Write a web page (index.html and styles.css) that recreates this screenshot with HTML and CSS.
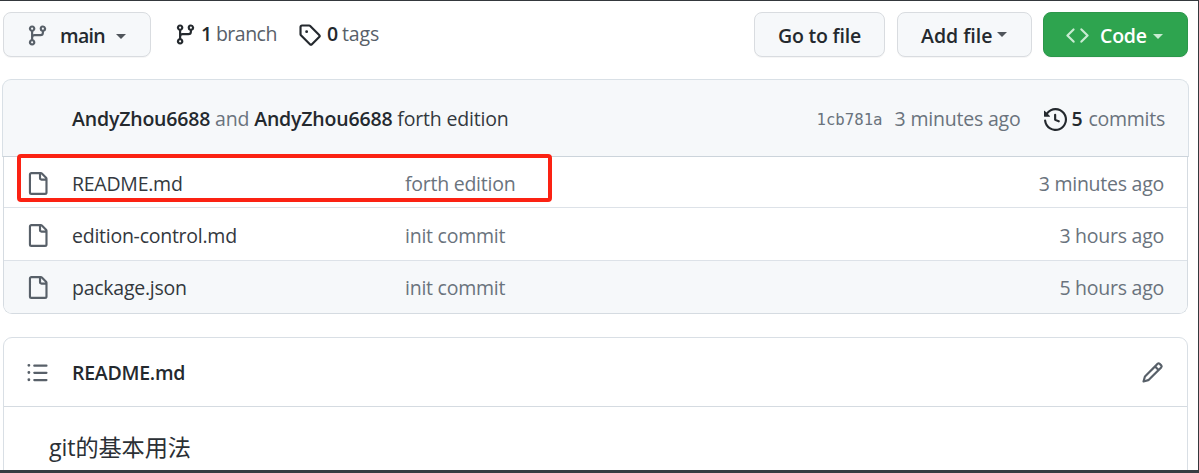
FILE: index.html
```html
<!DOCTYPE html>
<html lang="en">
<head>
<meta charset="utf-8">
<title>Repository files</title>
<link rel="stylesheet" href="styles.css">
</head>
<body>
<svg class="sprite" aria-hidden="true">
  <symbol id="branch" viewBox="0 0 16 16"><path fill-rule="evenodd" d="M11.75 2.5a.75.75 0 100 1.5.75.75 0 000-1.5zm-2.25.75a2.25 2.25 0 113 2.122V6A2.5 2.5 0 0110 8.5H6a1 1 0 00-1 1v1.128a2.251 2.251 0 11-1.5 0V5.372a2.25 2.25 0 111.5 0v1.836A2.492 2.492 0 016 7h4a1 1 0 001-1v-.628A2.25 2.25 0 019.5 3.25zM4.25 12a.75.75 0 100 1.5.75.75 0 000-1.5zM3.5 3.25a.75.75 0 111.5 0 .75.75 0 01-1.5 0z"/></symbol>
  <symbol id="tag" viewBox="0 0 16 16"><path fill-rule="evenodd" d="M2.5 7.775V2.75a.25.25 0 01.25-.25h5.025a.25.25 0 01.177.073l6.25 6.25a.25.25 0 010 .354l-5.025 5.025a.25.25 0 01-.354 0l-6.25-6.25a.25.25 0 01-.073-.177zm-1.5 0V2.75C1 1.784 1.784 1 2.75 1h5.025c.464 0 .91.184 1.238.513l6.25 6.25a1.75 1.75 0 010 2.474l-5.026 5.026a1.75 1.75 0 01-2.474 0l-6.25-6.25A1.75 1.75 0 011 7.775zM6 5a1 1 0 100 2 1 1 0 000-2z"/></symbol>
  <symbol id="code" viewBox="0 0 16 16"><path fill-rule="evenodd" d="M4.72 3.22a.75.75 0 011.06 1.06L2.06 8l3.72 3.72a.75.75 0 11-1.06 1.06L.47 8.53a.75.75 0 010-1.06l4.25-4.25zm6.56 0a.75.75 0 10-1.06 1.06L13.94 8l-3.72 3.72a.75.75 0 101.06 1.06l4.25-4.25a.75.75 0 000-1.06l-4.25-4.25z"/></symbol>
  <symbol id="history" viewBox="0 0 16 16"><path fill-rule="evenodd" d="M1.643 3.143L.427 1.927A.25.25 0 000 2.104V5.75c0 .138.112.25.25.25h3.646a.25.25 0 00.177-.427L2.715 4.215a6.5 6.5 0 11-1.18 4.458.75.75 0 10-1.493.154 8.001 8.001 0 101.6-5.684zM7.75 4a.75.75 0 01.75.75v2.992l2.028.812a.75.75 0 01-.557 1.392l-2.5-1A.75.75 0 017 8.25v-3.5A.75.75 0 017.75 4z"/></symbol>
  <symbol id="file" viewBox="0 0 16 16"><path fill-rule="evenodd" d="M2 1.75C2 .784 2.784 0 3.75 0h6.586c.464 0 .909.184 1.237.513l2.914 2.914c.329.328.513.773.513 1.237v9.586A1.75 1.75 0 0113.25 16h-9.5A1.75 1.75 0 012 14.25V1.75zm1.75-.25a.25.25 0 00-.25.25v12.5c0 .138.112.25.25.25h9.5a.25.25 0 00.25-.25V6h-2.75A1.75 1.75 0 019 4.25V1.5H3.75zm6.75.062V4.25c0 .138.112.25.25.25h2.688a.252.252 0 00-.011-.013l-2.914-2.914a.272.272 0 00-.013-.011z"/></symbol>
  <symbol id="list" viewBox="0 0 16 16"><path fill-rule="evenodd" d="M2 4a1 1 0 100-2 1 1 0 000 2zm3.75-1.5a.75.75 0 000 1.5h8.5a.75.75 0 000-1.5h-8.5zm0 5a.75.75 0 000 1.5h8.5a.75.75 0 000-1.5h-8.5zm0 5a.75.75 0 000 1.5h8.5a.75.75 0 000-1.5h-8.5zM3 8a1 1 0 11-2 0 1 1 0 012 0zm-1 6a1 1 0 100-2 1 1 0 000 2z"/></symbol>
  <symbol id="pencil" viewBox="0 0 16 16"><path fill-rule="evenodd" d="M11.013 1.427a1.75 1.75 0 012.474 0l1.086 1.086a1.75 1.75 0 010 2.474l-8.61 8.61c-.21.21-.47.364-.756.445l-3.251.93a.75.75 0 01-.927-.928l.929-3.25a1.75 1.75 0 01.445-.758l8.61-8.61zm1.414 1.06a.25.25 0 00-.354 0L10.811 3.75l1.439 1.44 1.263-1.263a.25.25 0 000-.354l-1.086-1.086zM11.189 6.25L9.75 4.81l-6.286 6.287a.25.25 0 00-.064.108l-.558 1.953 1.953-.558a.249.249 0 00.108-.064l6.286-6.286z"/></symbol>
</svg>
<div class="page">
  <nav class="toolbar">
    <button class="btn btn-branch"><svg class="icon"><use href="#branch"/></svg><span class="label">main</span><i class="caret"></i></button>
    <a class="stat stat-branch"><svg class="icon"><use href="#branch"/></svg><b>1</b><span>branch</span></a>
    <a class="stat stat-tags"><svg class="icon"><use href="#tag"/></svg><b>0</b><span>tags</span></a>
    <button class="btn btn-goto"><span class="label">Go to file</span></button>
    <button class="btn btn-add"><span class="label">Add file</span><i class="caret"></i></button>
    <button class="btn btn-code"><svg class="icon"><use href="#code"/></svg><span class="label">Code</span><i class="caret"></i></button>
  </nav>
  <section class="files">
    <header class="commit">
      <p class="message"><b>AndyZhou6688</b> <span class="muted">and</span> <b>AndyZhou6688</b> <span class="title">forth edition</span></p>
      <code class="hash">1cb781a</code>
      <span class="when">3 minutes ago</span>
      <a class="history"><svg class="icon"><use href="#history"/></svg><b>5</b><span class="muted">commits</span></a>
    </header>
    <div class="rows">
      <div class="row first"><svg class="icon"><use href="#file"/></svg><span class="name">README.md</span><span class="muted">forth edition</span><span class="muted age">3 minutes ago</span></div>
      <div class="row second"><svg class="icon"><use href="#file"/></svg><span class="name">edition-control.md</span><span class="muted">init commit</span><span class="muted age">3 hours ago</span></div>
      <div class="row shaded"><svg class="icon"><use href="#file"/></svg><span class="name">package.json</span><span class="muted">init commit</span><span class="muted age">5 hours ago</span></div>
    </div>
    <div class="highlight"></div>
  </section>
  <section class="readme">
    <header class="readme-head"><svg class="icon"><use href="#list"/></svg><b>README.md</b><svg class="icon edit"><use href="#pencil"/></svg></header>
    <p class="readme-body">git的基本用法</p>
  </section>
</div>
</body>
</html>
```

FILE: styles.css
```css
* { box-sizing: border-box; }
body {
  margin: 0;
  background: #fff;
  color: #24292e;
  font: 19.5px/28px "Open Sans", "Noto Sans CJK SC", sans-serif;
  letter-spacing: -0.25px;
}
p { margin: 0; }
b { font-weight: 600; }
.sprite { display: none; }
.icon { width: 23px; height: 23px; fill: #586069; flex: none; display: block; }
.muted { color: #6a737d; }
.name, .title { color: #33383e; }

.page {
  width: 1199px;
  height: 473px;
  overflow: hidden;
  border-top: 1px solid #34383d;
  border-right: 1px solid #34383d;
  border-bottom: 3px solid #373c42;
}

.toolbar { display: flex; height: 78px; padding: 11px 10px 0 3px; }
.btn {
  display: flex;
  align-items: center;
  height: 45px;
  padding: 2px 0 0;
  border: 1px solid #d9dce0;
  border-radius: 8px;
  background: #f6f8fa;
  box-shadow: 0 1px 0 rgba(27, 31, 35, .04);
  color: #24292e;
  font: inherit;
  font-weight: 600;
  letter-spacing: -0.2px;
  white-space: nowrap;
}
.caret {
  border: 5.5px solid transparent;
  border-top-color: #50555b;
  border-bottom: 0;
  flex: none;
}
.btn-branch { width: 148px; padding-left: 22px; }
.btn-branch .label { width: 56px; margin-left: 11px; text-align: left; letter-spacing: -0.7px; }
.btn-branch .caret { margin-top: 2px; }
.stat { display: flex; height: 45px; align-items: center; }
.stat .icon { fill: #24292e; }
.stat b, .stat span { margin-top: -1px; }
.stat b { margin-right: 4px; margin-left: 4px; }
.stat span { color: #586069; letter-spacing: -0.5px; }
.stat-branch { width: 124px; margin-left: 23px; }
.stat-tags b { margin-left: 6px; }
.stat-tags span { letter-spacing: -0.1px; }
.btn-goto { width: 131px; margin-left: auto; justify-content: center; }
.btn-add { width: 135px; margin-left: 12px; padding-left: 23px; }
.btn-add .label { width: 76px; text-align: left; letter-spacing: 0; }
.btn-add .caret { margin-top: -3px; }
.btn-code { width: 145px; margin-left: 11px; padding-left: 22px; background: #2ea44f; border-color: #2c974b; color: #fff; }
.btn-code .label { width: 53px; margin-left: 11px; text-align: left; }
.btn-code .icon { fill: #c9ebd2; }
.btn-code .caret { margin-top: 2px; border-top-color: #c9ebd2; }

.files { position: relative; width: 1187px; margin-left: 2px; }
.commit {
  display: flex;
  align-items: center;
  height: 78px;
  padding: 2px 23px 0 69px;
  border: 1px solid #d9e0e6;
  border-bottom-color: #ccd4db;
  border-radius: 9px 9px 0 0;
  background: #f6f8fa;
}
.message { flex: 1; white-space: nowrap; letter-spacing: -0.18px; }
.hash { padding-top: 1px; font: 15.7px/28px "DejaVu Sans Mono", monospace; letter-spacing: 0; color: #6a737d; }
.when { margin-left: 12px; color: #6a737d; letter-spacing: -0.2px; }
.history { display: flex; align-items: center; margin-left: 23px; }
.history .icon { fill: #24292e; }
.history b { margin: 0 6px 0 5px; }
.rows {
  margin: 0 1px;
  border: 1px solid #d5dbe1;
  border-top: 0;
  border-radius: 0 0 9px 9px;
  overflow: hidden;
}
.row {
  display: grid;
  grid-template-columns: 46px 333px 1fr auto;
  align-items: center;
  height: 53px;
  padding: 1px 23px 0 22px;
  border-top: 1px solid #dde2e8;
}
.row.first { height: 50px; padding-top: 3px; border-top: 0; }
.row.second { padding-top: 3px; }
.row.shaded { background: #f6f8fa; }
.highlight {
  position: absolute;
  left: 15px;
  top: 75px;
  width: 535px;
  height: 48px;
  border: 4px solid #fb2213;
  border-radius: 4px;
}

.readme { width: 1185px; height: 160px; margin: 23px 0 0 3px; border: 1px solid #d9dfe5; border-radius: 9px 9px 0 0; }
.readme-head { display: flex; align-items: center; height: 69px; padding: 0 23px 0 22px; border-bottom: 1px solid #d5dbe1; }
.readme-head b { margin: 1px 0 0 23px; }
.edit { margin-left: auto; }
.readme-body { padding: 23px 0 0 45px; color: #2b3035; font-size: 23.2px; line-height: 34px; letter-spacing: -0.1px; }
```
